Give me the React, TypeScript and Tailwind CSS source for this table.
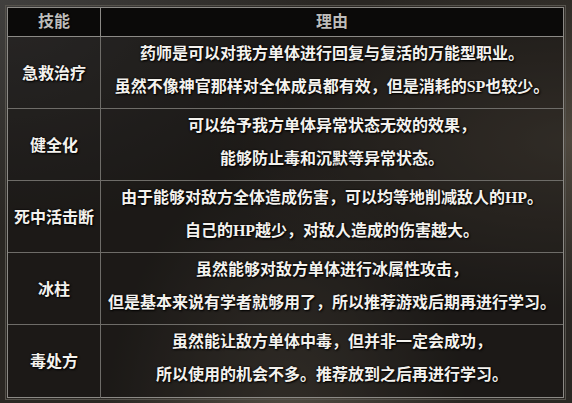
import React from "react";

const rows: { skill: string; lines: React.ReactNode[] }[] = [
  {
    skill: "急救治疗",
    lines: [
      "药师是可以对我方单体进行回复与复活的万能型职业。",
      "虽然不像神官那样对全体成员都有效，但是消耗的SP也较少。",
    ],
  },
  {
    skill: "健全化",
    lines: ["可以给予我方单体异常状态无效的效果，", "能够防止毒和沉默等异常状态。"],
  },
  {
    skill: "死中活击断",
    lines: [
      "由于能够对敌方全体造成伤害，可以均等地削减敌人的HP。",
      "自己的HP越少，对敌人造成的伤害越大。",
    ],
  },
  {
    skill: "冰柱",
    lines: [
      "虽然能够对敌方单体进行冰属性攻击，",
      "但是基本来说有学者就够用了，所以推荐游戏后期再进行学习。",
    ],
  },
  {
    skill: "毒处方",
    lines: ["虽然能让敌方单体中毒，但并非一定会成功，", "所以使用的机会不多。推荐放到之后再进行学习。"],
  },
];

export default function App() {
  return (
    <div
      className="w-[572px] h-[403px] overflow-hidden pt-[7px] pl-[7px] bg-[#2a2723] bg-[radial-gradient(ellipse_at_100%_35%,rgba(110,100,85,0.55)_0%,rgba(0,0,0,0)_45%),radial-gradient(ellipse_at_50%_110%,rgba(110,102,88,0.6)_0%,rgba(0,0,0,0)_45%),radial-gradient(ellipse_at_0%_0%,rgba(80,80,80,0.6)_0%,rgba(0,0,0,0)_40%)]"
      style={{ fontFamily: '"Liberation Serif", "Noto Sans CJK SC", serif' }}
    >
      <div className="w-[557px] border border-[#8c8a86] outline outline-1 outline-offset-1 outline-[#55524c] font-bold text-[16px]">
        <div className="grid grid-cols-[93px_1fr] h-[29px] bg-[#0b0a09] border-b border-[#8c8a86] text-[#bdbcba] [text-shadow:0_0_2px_#000]">
          <div className="flex items-center justify-center border-r border-[#8c8a86]">技能</div>
          <div className="flex items-center justify-center">理由</div>
        </div>
        {rows.map((r, i) => (
          <div
            key={i}
            className={`grid grid-cols-[93px_1fr] h-[72px] bg-[rgba(10,9,8,0.45)] text-[#f4f2ee] [text-shadow:0_0_2px_#000,1px_1px_2px_#000] ${
              i < rows.length - 1 ? "border-b border-[#6e6c68]" : ""
            }`}
          >
            <div className="flex items-center justify-center border-r border-[#6e6c68]">{r.skill}</div>
            <div className="flex flex-col items-center justify-center pb-[7px] leading-[33px]">
              {r.lines.map((l, j) => (
                <div key={j}>{l}</div>
              ))}
            </div>
          </div>
        ))}
      </div>
    </div>
  );
}
